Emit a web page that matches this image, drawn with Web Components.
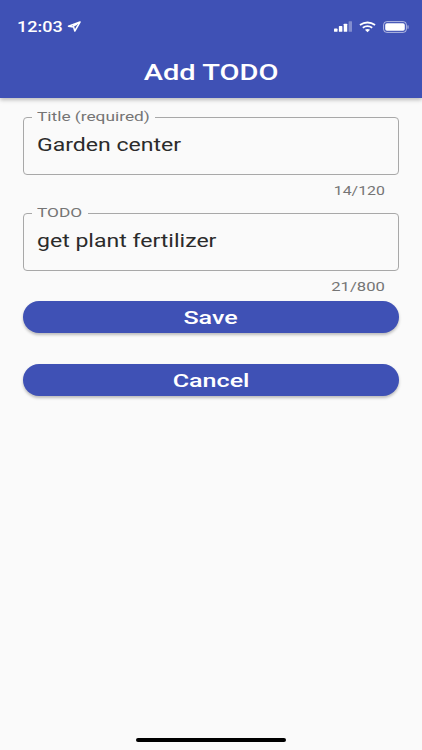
<!DOCTYPE html>
<html><head><meta charset="utf-8">
<style>
html,body{margin:0;padding:0;height:100%;}
body{font-family:Roboto,"Liberation Sans",sans-serif;background:#fafafa;}
</style></head>
<body>
<todo-app></todo-app>
<template id="t-text"><style>
:host{display:inline-block;transform:scaleX(var(--sx,1.2));transform-origin:var(--origin,center);white-space:nowrap}
</style><slot></slot></template>

<template id="t-status"><style>
:host{display:flex;align-items:center;justify-content:space-between;height:27px;padding:13px 13px 0 16.5px;color:#fff}
.time{display:flex;align-items:center;font-size:15px;font-weight:500;--origin:left}
.icons{display:flex;align-items:center;gap:7px}
svg{display:block}
</style>
<div class="time"><wide-text>12:03</wide-text><svg style="margin-left:12px" width="14" height="11" viewBox="0 0 14 11"><path d="M13 1 L1.5 5.2 L6.6 6 L7.8 10 Z M10 3 L6.3 5.2" fill="none" stroke="#fff" stroke-width="1.5" stroke-linejoin="round"/></svg></div>
<div class="icons">
<svg width="18.5" height="11" viewBox="0 0 19 11"><rect x="0" y="7.5" width="3.6" height="3.5" rx=".7" fill="#fff"/><rect x="5" y="5" width="3.6" height="6" rx=".7" fill="#fff"/><rect x="10" y="2.6" width="3.6" height="8.4" rx=".7" fill="#fff"/><rect x="15" y="0" width="3.6" height="11" rx=".7" fill="#fff" opacity=".35"/></svg>
<svg width="17" height="12" viewBox="0 0 18 12" fill="none" stroke="#fff" stroke-width="1.9"><path d="M1 4 Q9 -1.5 17 4"/><path d="M4 6.8 Q9 3.3 14 6.8"/><path d="M9 11.6 L6.3 9 Q9 7.4 11.7 9 Z" fill="#fff" stroke="none"/></svg>
<svg width="26" height="12" viewBox="0 0 26 12"><rect x=".6" y=".6" width="22.8" height="10.8" rx="3.2" fill="none" stroke="#fff" stroke-opacity=".6" stroke-width="1"/><rect x="2.2" y="2.2" width="19.6" height="7.6" rx="1.8" fill="#fff"/><rect x="24.4" y="4.2" width="1.2" height="3.6" rx=".6" fill="#fff" opacity=".55"/></svg>
</div></template>

<template id="t-bar"><style>
:host{display:block;height:98px;background:#3f51b5;box-shadow:0 2px 4px rgba(0,0,0,.25);position:relative;color:#fff}
.title{display:flex;justify-content:center;margin-top:20px;font-size:22px;font-weight:500;line-height:26px;--sx:1.32}
</style><status-row></status-row><div class="title"><wide-text><slot></slot></wide-text></div></template>

<template id="t-field"><style>
:host{display:block;position:relative;color:#2b2b2b}
.box{box-sizing:border-box;height:58px;border:1.3px solid #a8a8a8;border-radius:4px;padding:0 12.5px;display:flex;align-items:center;font-size:18px;line-height:22px;--origin:left;--sx:1.28}
.box wide-text{position:relative;top:-1px}
.label{position:absolute;left:9px;top:-8px;background:#fafafa;padding:0 5px 0 4.5px;font-size:13px;line-height:15px;color:#757575;--origin:left;--sx:1.33;width:var(--notch);height:15px;box-sizing:content-box}
.count{display:flex;justify-content:flex-end;padding:8px 14.5px 0 0;font-size:13px;line-height:15px;color:#757575;--origin:right;--sx:var(--count-sx)}
</style>
<span class="label"><wide-text id="l"></wide-text></span>
<div class="box"><wide-text id="v"></wide-text></div>
<div class="count"><wide-text id="c"></wide-text></div></template>

<template id="t-btn"><style>
:host{display:flex;align-items:center;justify-content:center;box-sizing:border-box;height:32px;padding-top:1px;border-radius:16px;background:#3f51b5;color:#fff;font-size:19px;font-weight:500;box-shadow:0 2px 3px rgba(0,0,0,.25);--sx:1.32}
</style><wide-text><slot></slot></wide-text></template>

<template id="t-home"><style>
:host{display:block;position:absolute;left:136px;bottom:8px;width:150px;height:4px;border-radius:2px;background:#000}
</style></template>

<template id="t-app"><style>
:host{display:block;height:750px;position:relative;overflow:hidden;background:#fafafa}
main{display:flex;flex-direction:column;padding:18.5px 23px 0}
todo-field+todo-field{margin-top:15px}
.save{margin-top:7px}
.cancel{margin-top:31px}
</style>
<app-bar>Add TODO</app-bar>
<main>
<todo-field label="Title (required)" value="Garden center" count="14/120" notch="113px" style="--count-sx:1.22"></todo-field>
<todo-field label="TODO" value="get plant fertilizer" count="21/800" notch="46px" style="--count-sx:1.28"></todo-field>
<app-btn class="save">Save</app-btn>
<app-btn class="cancel">Cancel</app-btn>
</main>
<home-bar></home-bar></template>

<script>
function def(name,tpl,init){
  customElements.define(name,class extends HTMLElement{
    constructor(){super();const r=this.attachShadow({mode:'open'});
      r.appendChild(document.getElementById(tpl).content.cloneNode(true));}
    connectedCallback(){init&&init(this,this.shadowRoot);}
  });
}
def('wide-text','t-text');
def('status-row','t-status');
def('app-bar','t-bar');
def('todo-field','t-field',(h,r)=>{
  r.getElementById('l').textContent=h.getAttribute('label');
  r.getElementById('v').textContent=h.getAttribute('value');
  r.getElementById('c').textContent=h.getAttribute('count');
  h.style.setProperty('--notch',h.getAttribute('notch'));
});
def('app-btn','t-btn');
def('home-bar','t-home');
def('todo-app','t-app');
</script>
</body></html>
